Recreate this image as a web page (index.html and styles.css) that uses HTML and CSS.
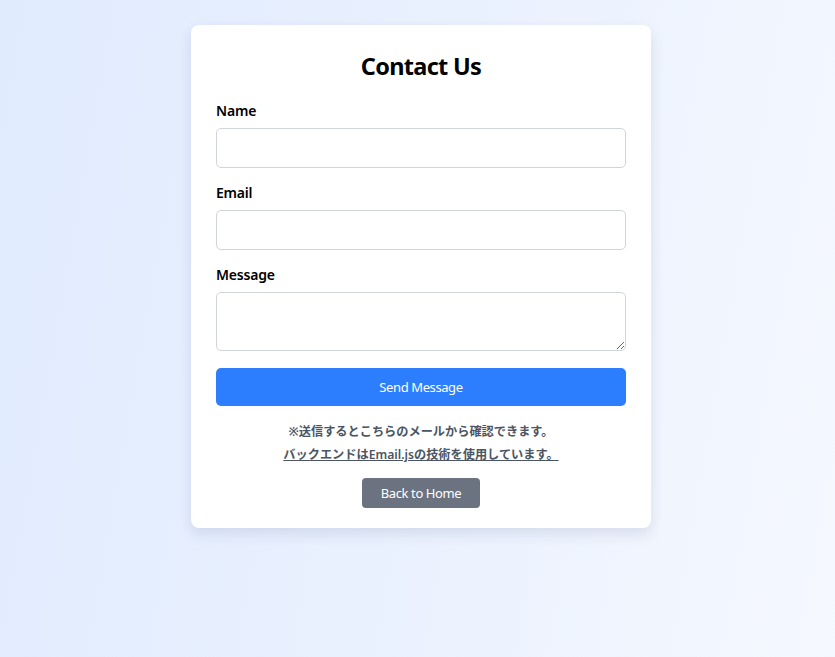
FILE: index.html
```html
<!DOCTYPE html>
<html lang="ja">
<head>
<meta charset="utf-8">
<title>Contact Us</title>
<link rel="stylesheet" href="styles.css">
</head>
<body>
<main class="page">
  <form class="card">
    <h2 class="title">Contact Us</h2>
    <div class="field">
      <label class="label" for="name">Name</label>
      <input class="input" id="name" type="text">
    </div>
    <div class="field">
      <label class="label" for="email">Email</label>
      <input class="input" id="email" type="email">
    </div>
    <div class="field field-last">
      <label class="label" for="message">Message</label>
      <textarea class="input textarea" id="message"></textarea>
    </div>
    <button class="send" type="button">Send Message</button>
    <p class="note">※送信するとこちらのメールから確認できます。</p>
    <p class="note"><a class="note-link" href="#">バックエンドはEmail.jsの技術を使用しています。</a></p>
    <div class="back-wrap"><a class="back" href="#">Back to Home</a></div>
  </form>
</main>
</body>
</html>
```

FILE: styles.css
```css
* { box-sizing: border-box; }
html, body { margin: 0; height: 100%; }
body {
  font-family: "Noto Sans", "Noto Sans CJK JP", sans-serif;
  background: linear-gradient(100deg, #e0ebfe 0%, #eaf1fe 50%, #f5f8ff 100%);
  color: #000;
}
.page {
  display: flex;
  justify-content: center;
  padding-top: 25px;
  padding-left: 7px;
}
.card {
  width: 460px;
  background: #fff;
  border-radius: 8px;
  padding: 25px 25px 20px;
  box-shadow: 0 6px 14px rgba(40, 60, 100, 0.12);
  display: flex;
  flex-direction: column;
}
.title {
  margin: 0 0 19px;
  font-size: 23.5px;
  line-height: 32px;
  font-weight: 700;
  letter-spacing: -0.7px;
  text-align: center;
}
.field { display: flex; flex-direction: column; margin-bottom: 15px; }
.field-last { margin-bottom: 17px; }
.label {
  font-size: 14px;
  line-height: 20px;
  font-weight: 600;
  letter-spacing: -0.2px;
  margin-bottom: 7px;
}
.input {
  height: 40px;
  border: 1px solid #d1d5db;
  border-radius: 5px;
  font: inherit;
  padding: 0 10px;
  background: #fff;
}
.textarea { height: 59px; resize: vertical; padding: 8px 10px; }
.send {
  height: 38px;
  border: none;
  border-radius: 5px;
  background: #2d7efe;
  color: #fff;
  font-family: inherit;
  font-size: 13px;
  letter-spacing: -0.4px;
  margin-bottom: 14px;
}
.note {
  margin: 0;
  text-align: center;
  font-size: 12.2px;
  line-height: 23px;
  font-weight: 600;
  color: #4b5563;
}
.note-link { color: #4b5563; text-decoration: underline; }
.back-wrap { display: flex; justify-content: center; margin-top: 12px; }
.back {
  display: inline-flex;
  align-items: center;
  height: 30px;
  padding: 0 19px;
  border-radius: 4px;
  background: #6b7280;
  color: #fff;
  font-size: 13px;
  letter-spacing: -0.4px;
  text-decoration: none;
}
```
